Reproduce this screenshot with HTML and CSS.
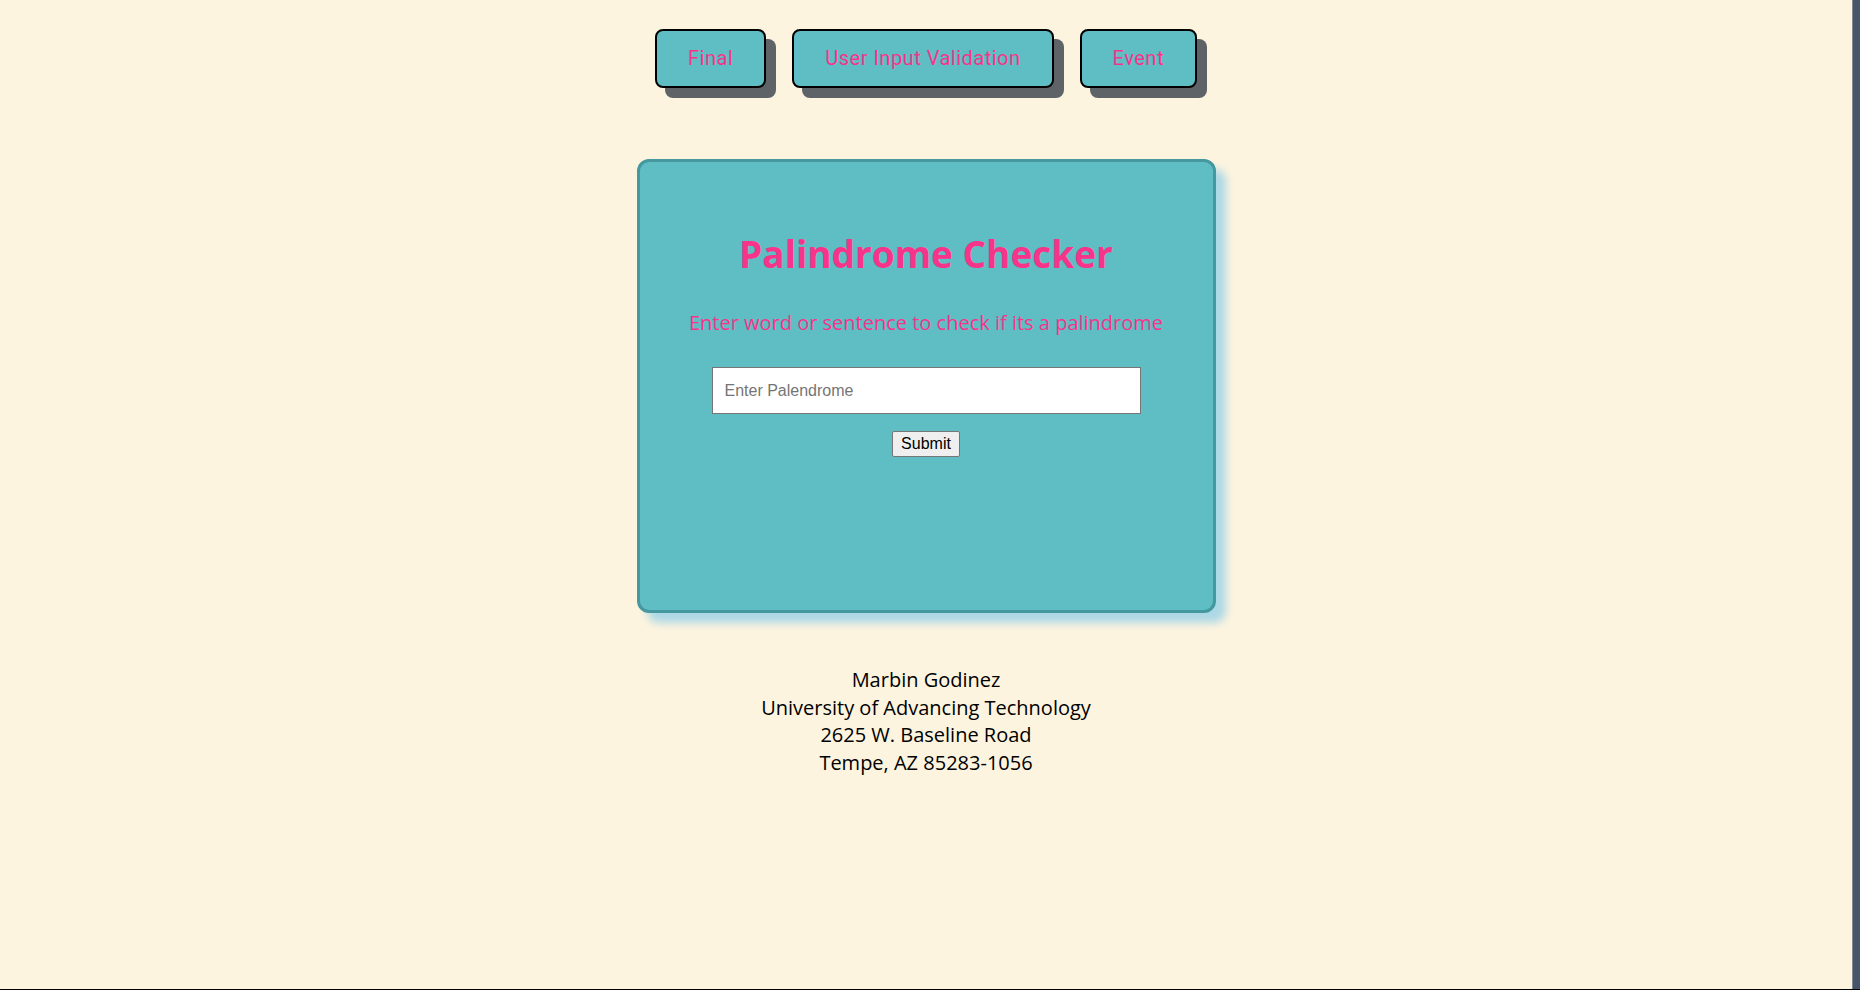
FILE: index.html
```html
<!DOCTYPE html>
<html lang="en">
<head>
<meta charset="utf-8">
<title>Palindrome Checker</title>
<link rel="stylesheet" href="styles.css">
</head>
<body>
<div class="frame">
  <div class="page">
    <nav class="nav">
      <a class="nav-btn" href="#">Final</a>
      <a class="nav-btn" href="#">User Input Validation</a>
      <a class="nav-btn" href="#">Event</a>
    </nav>
    <main class="card">
      <h1 class="title">Palindrome Checker</h1>
      <p class="subtitle">Enter word or sentence to check if its a palindrome</p>
      <form class="form">
        <input class="field" type="text" placeholder="Enter Palendrome">
        <button class="submit" type="button">Submit</button>
      </form>
    </main>
    <footer class="footer">
      <div>Marbin Godinez</div>
      <div>University of Advancing Technology</div>
      <div>2625 W. Baseline Road</div>
      <div>Tempe, AZ 85283-1056</div>
    </footer>
  </div>
  <div class="rail"></div>
</div>
</body>
</html>
```

FILE: styles.css
```css
html, body {
  margin: 0;
  padding: 0;
  height: 100%;
}
body {
  background: #fdf4df;
  font-family: "Comic Sans MS", "Open Sans", sans-serif;
}
.frame {
  display: flex;
  height: 990px;
  box-sizing: border-box;
  border-bottom: 1px solid #000;
}
.page {
  flex: 1;
  display: flex;
  flex-direction: column;
  align-items: center;
}
.rail {
  width: 7px;
  background: #475569;
  border-left: 1px solid #7f8891;
}
.nav {
  display: flex;
  justify-content: center;
  gap: 26px;
  padding-top: 29px;
}
.nav-btn {
  display: block;
  font-family: Roboto, "Noto Sans", sans-serif;
  font-size: 20px;
  line-height: 23px;
  letter-spacing: 0.5px;
  color: #f7348a;
  text-decoration: none;
  background: #5fbdc4;
  border: 2px solid #000;
  border-radius: 8px;
  padding: 16px 31px;
  box-shadow: 10px 10px 0 #5e6367;
}
.card {
  margin-top: 71px;
  width: 579px;
  height: 454px;
  box-sizing: border-box;
  background: #5fbdc4;
  border: 3px solid #45989e;
  border-radius: 12px;
  box-shadow: 10px 10px 9px #add8e6;
  display: flex;
  flex-direction: column;
  align-items: center;
  padding-top: 67px;
}
.title {
  margin: 0;
  font-size: 37px;
  line-height: 50px;
  font-weight: 700;
  color: #f7348a;
}
.subtitle {
  margin: 30px 0 0;
  font-size: 20px;
  line-height: 28px;
  color: #f7348a;
}
.form {
  display: flex;
  flex-direction: column;
  align-items: center;
  margin-top: 30px;
}
.field {
  width: 429px;
  height: 47px;
  box-sizing: border-box;
  border: 1px solid #767676;
  border-radius: 0;
  padding: 0 12px;
  font-family: "Liberation Sans", Arial, sans-serif;
  font-size: 16px;
  background: #fff;
  color: #000;
}
.field::placeholder {
  color: #757575;
}
.submit {
  margin-top: 17px;
  font-family: "Liberation Sans", Arial, sans-serif;
  font-size: 16px;
  line-height: 18px;
  padding: 3px 8px;
  background: #efefef;
  border: 1px solid #767676;
  border-radius: 2px;
  color: #000;
}
.footer {
  margin-top: 53px;
  text-align: center;
  font-size: 20px;
  line-height: 27.7px;
  color: #000;
}
```
